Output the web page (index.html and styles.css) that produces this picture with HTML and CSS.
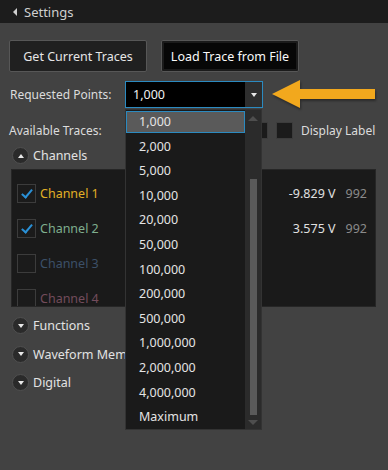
FILE: index.html
```html
<!DOCTYPE html>
<html lang="en">
  <head>
    <meta charset="UTF-8" />
    <link rel="stylesheet" href="styles.css">
  </head>
  <body>
    <div class="topbar">
      <span class="back-tri"></span>
      <span>Settings</span>
    </div>
    <div class="panel">
      <div class="btn-row">
        <button class="btn">Get Current Traces</button>
        <button class="btn btn-dark">Load Trace from File</button>
      </div>

      <div class="field-row">
        <span class="field-label">Requested Points:</span>
        <div class="select-wrap">
          <div class="select">
            <span class="select-value">1,000</span>
            <span class="select-btn"><span class="tri-down"></span></span>
          </div>
          <div class="dropdown">
            <div class="options">
              <div class="option selected">1,000</div>
              <div class="option">2,000</div>
              <div class="option">5,000</div>
              <div class="option">10,000</div>
              <div class="option">20,000</div>
              <div class="option">50,000</div>
              <div class="option">100,000</div>
              <div class="option">200,000</div>
              <div class="option">500,000</div>
              <div class="option">1,000,000</div>
              <div class="option">2,000,000</div>
              <div class="option">4,000,000</div>
              <div class="option">Maximum</div>
            </div>
            <div class="scrollbar">
              <span class="sb-up"></span>
              <span class="sb-thumb"></span>
              <span class="sb-down"></span>
            </div>
          </div>
        </div>
        <svg class="callout" width="106" height="30" viewBox="0 0 106 30">
          <polygon points="1,14 29,0 29,9 104,9 104,19 29,19 29,28" fill="#f2a81d" />
        </svg>
      </div>

      <div class="traces-row">
        <span class="field-label">Available Traces:</span>
        <span class="check"></span>
        <span class="check"></span>
        <span class="traces-opt">Display Label</span>
      </div>

      <div class="section">
        <span class="circle"><span class="tri-up"></span></span>
        <span>Channels</span>
      </div>

      <div class="channels">
        <div class="ch-row">
          <span class="check on"></span>
          <span class="ch-name ch1">Channel 1</span>
          <span class="ch-val">-9.829 V</span>
          <span class="ch-cnt">992</span>
        </div>
        <div class="ch-row">
          <span class="check on"></span>
          <span class="ch-name ch2">Channel 2</span>
          <span class="ch-val">3.575 V</span>
          <span class="ch-cnt">992</span>
        </div>
        <div class="ch-row">
          <span class="check"></span>
          <span class="ch-name ch3">Channel 3</span>
        </div>
        <div class="ch-row">
          <span class="check"></span>
          <span class="ch-name ch4">Channel 4</span>
        </div>
      </div>

      <div class="section">
        <span class="circle"><span class="tri-down"></span></span>
        <span>Functions</span>
      </div>
      <div class="section">
        <span class="circle"><span class="tri-down"></span></span>
        <span>Waveform Memory</span>
      </div>
      <div class="section">
        <span class="circle"><span class="tri-down"></span></span>
        <span>Digital</span>
      </div>
    </div>
  </body>
</html>
```

FILE: styles.css
```css
body {
  margin: 0;
  width: 388px;
  height: 470px;
  background-color: #424242;
  font-family: "Noto Sans", Tahoma, sans-serif;
  font-size: 12px;
  color: #dcdcdc;
  overflow: hidden;
}
.topbar {
  height: 23px;
  background-color: #1c1c1c;
  display: flex;
  align-items: center;
  gap: 7px;
  padding-left: 13px;
  color: #cfcfcf;
  font-size: 13px;
}
.back-tri {
  width: 0;
  height: 0;
  border-top: 4px solid transparent;
  border-bottom: 4px solid transparent;
  border-right: 4px solid #d0d0d0;
}
.panel {
  padding: 17px 12px 0 9px;
}

.btn-row {
  display: flex;
  gap: 14px;
}
.btn {
  width: 138px;
  height: 32px;
  background-color: #202020;
  border: 1px solid #575757;
  border-radius: 2px;
  color: #e6e6e6;
  font-family: inherit;
  font-size: 12.5px;
  padding: 0;
}
.btn-dark {
  background-color: #070707;
  color: #fafafa;
  box-shadow: inset 0 0 0 2px #1b1b1b;
}

.field-row {
  display: flex;
  align-items: center;
  margin-top: 9px;
  height: 27px;
}
.field-label {
  width: 115px;
  padding-left: 1px;
}
.select-wrap {
  position: relative;
}
.select {
  width: 136px;
  height: 25px;
  background-color: #000;
  border: 1px solid #2b8ac0;
  display: flex;
  align-items: center;
}
.select-value {
  flex: 1;
  padding-left: 7px;
  color: #f0f0f0;
  font-size: 12.5px;
}
.select-btn {
  width: 17px;
  height: 25px;
  background-color: #2e2e2e;
  display: flex;
  align-items: center;
  justify-content: center;
}
.tri-down {
  width: 0;
  height: 0;
  border-left: 3.5px solid transparent;
  border-right: 3.5px solid transparent;
  border-top: 4px solid #e8e8e8;
}
.tri-up {
  width: 0;
  height: 0;
  border-left: 3.5px solid transparent;
  border-right: 3.5px solid transparent;
  border-bottom: 4px solid #e8e8e8;
}
.callout {
  position: absolute;
  left: 271px;
  top: 80px;
  filter: drop-shadow(1px 2px 1px rgba(0, 0, 0, 0.35));
}

.dropdown {
  position: absolute;
  z-index: 10;
  top: 28px;
  left: 0;
  width: 137px;
  height: 321px;
  background-color: #1a1a1a;
  border: 1px solid #333;
  box-sizing: border-box;
  display: flex;
}
.options {
  flex: 1;
  padding-top: 1px;
}
.option {
  height: 22px;
  margin-bottom: 2.6px;
  line-height: 22px;
  padding-left: 13px;
  color: #e4e4e4;
  font-size: 12.5px;
  box-sizing: border-box;
}
.option.selected {
  background-color: #5a5a5a;
  border: 1px solid #2b8ac0;
  line-height: 20px;
  padding-left: 12px;
}
.scrollbar {
  width: 16px;
  background-color: #2b2b2b;
  display: flex;
  flex-direction: column;
  align-items: center;
}
.sb-up {
  margin-top: 6px;
  width: 0;
  height: 0;
  border-left: 5px solid transparent;
  border-right: 5px solid transparent;
  border-bottom: 5px solid #4e4e4e;
}
.sb-thumb {
  margin-top: 58px;
  width: 7px;
  height: 236px;
  background-color: #5a5a5a;
}
.sb-down {
  margin-top: 5px;
  width: 0;
  height: 0;
  border-left: 5px solid transparent;
  border-right: 5px solid transparent;
  border-top: 5px solid #4e4e4e;
}

.traces-row {
  display: flex;
  align-items: center;
  height: 17px;
  margin-top: 14px;
  padding-left: 0;
}
.traces-row .field-label {
  width: 242px;
  padding-left: 0;
}
.traces-row .check + .check {
  margin-left: 8px;
}
.traces-opt {
  margin-left: 8px;
}
.check {
  width: 17px;
  height: 17px;
  box-sizing: border-box;
  background-color: #1b1b1b;
  border: 1px solid #3c3c3c;
  position: relative;
  flex-shrink: 0;
}
.check.on:after {
  content: "";
  position: absolute;
  left: 5px;
  top: 2px;
  width: 4px;
  height: 9px;
  border-right: 2px solid #2a90d6;
  border-bottom: 2px solid #2a90d6;
  transform: rotate(40deg);
}

.section {
  display: flex;
  align-items: center;
  gap: 4px;
  height: 17px;
  padding-left: 3px;
  margin-top: 8px;
  font-size: 12.5px;
  color: #e2e2e2;
  white-space: nowrap;
}
.channels + .section {
  margin-top: 10px;
}
.section + .section {
  margin-top: 11.5px;
}
.circle {
  width: 17px;
  height: 17px;
  box-sizing: border-box;
  border-radius: 50%;
  background-color: #2a2a2a;
  border: 1px solid #505050;
  display: flex;
  align-items: center;
  justify-content: center;
}

.channels {
  margin: 5px 0 0 2px;
  height: 138px;
  box-sizing: border-box;
  background-color: #1a1a1a;
  border: 1px solid #262626;
  padding: 6px 8px 0 5px;
  overflow: hidden;
}
.ch-row {
  display: flex;
  align-items: center;
  height: 35px;
  font-size: 12.5px;
}
.ch-row .check {
  width: 19px;
  height: 19px;
}
.ch-row .check.on:after {
  left: 6px;
  top: 2px;
}
.ch-name {
  flex: 1;
  margin-left: 4px;
}
.ch1 { color: #e2b025; }
.ch2 { color: #7fae8e; }
.ch3 { color: #3c5068; }
.ch4 { color: #734c5c; }
.ch-val {
  color: #e0e0e0;
}
.ch-cnt {
  color: #8a8a8a;
  margin-left: 10px;
}
```
